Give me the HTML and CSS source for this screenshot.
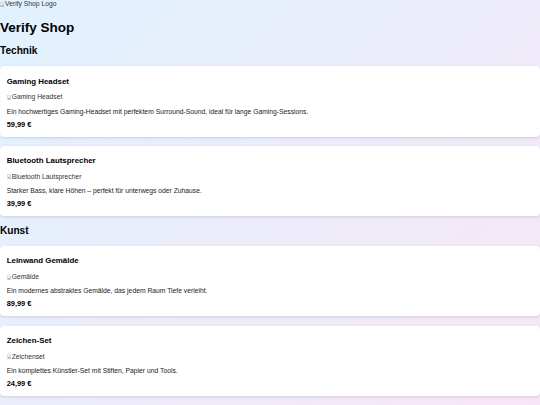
FILE: index.html
```html
<!DOCTYPE html>
<html lang="de">
<head>
    <meta charset="UTF-8">
    <meta name="viewport" content="width=device-width, initial-scale=1.0">
    <title>Verify Shop</title>
    <link rel="stylesheet" href="styles.css">
</head>
<body>

<!-- Logo (image not loaded, alt text shown) -->
<div class="logo">
    <svg class="broken-img" viewBox="0 0 8 9"><path d="M0.5 0.5h5l2 2v6h-7z" fill="#f4f4f4" stroke="#9a9a9a" stroke-width="0.6"/><path d="M1.2 7.8l2-2.4 1.4 1.4 1-0.9 1.3 1.9z" fill="#5aa65a"/><circle cx="5.6" cy="3.6" r="0.8" fill="#4a8fd8"/></svg>Verify Shop Logo
</div>

<h1>Verify Shop</h1>

<section class="category">
    <h2>Technik</h2>
    <div class="products">
        <article class="product">
            <h3>Gaming Headset</h3>
            <div class="product-img">
                <svg class="broken-img" viewBox="0 0 8 9"><path d="M0.5 0.5h5l2 2v6h-7z" fill="#f4f4f4" stroke="#9a9a9a" stroke-width="0.6"/><path d="M1.2 7.8l2-2.4 1.4 1.4 1-0.9 1.3 1.9z" fill="#5aa65a"/><circle cx="5.6" cy="3.6" r="0.8" fill="#4a8fd8"/></svg>Gaming Headset
            </div>
            <p class="desc">Ein hochwertiges Gaming-Headset mit perfektem Surround-Sound, ideal für lange Gaming-Sessions.</p>
            <p class="price">59,99 €</p>
        </article>
        <article class="product">
            <h3>Bluetooth Lautsprecher</h3>
            <div class="product-img">
                <svg class="broken-img" viewBox="0 0 8 9"><path d="M0.5 0.5h5l2 2v6h-7z" fill="#f4f4f4" stroke="#9a9a9a" stroke-width="0.6"/><path d="M1.2 7.8l2-2.4 1.4 1.4 1-0.9 1.3 1.9z" fill="#5aa65a"/><circle cx="5.6" cy="3.6" r="0.8" fill="#4a8fd8"/></svg>Bluetooth Lautsprecher
            </div>
            <p class="desc">Starker Bass, klare Höhen – perfekt für unterwegs oder Zuhause.</p>
            <p class="price">39,99 €</p>
        </article>
    </div>
</section>

<section class="category">
    <h2>Kunst</h2>
    <div class="products">
        <article class="product">
            <h3>Leinwand Gemälde</h3>
            <div class="product-img">
                <svg class="broken-img" viewBox="0 0 8 9"><path d="M0.5 0.5h5l2 2v6h-7z" fill="#f4f4f4" stroke="#9a9a9a" stroke-width="0.6"/><path d="M1.2 7.8l2-2.4 1.4 1.4 1-0.9 1.3 1.9z" fill="#5aa65a"/><circle cx="5.6" cy="3.6" r="0.8" fill="#4a8fd8"/></svg>Gemälde
            </div>
            <p class="desc">Ein modernes abstraktes Gemälde, das jedem Raum Tiefe verleiht.</p>
            <p class="price">89,99 €</p>
        </article>
        <article class="product">
            <h3>Zeichen-Set</h3>
            <div class="product-img">
                <svg class="broken-img" viewBox="0 0 8 9"><path d="M0.5 0.5h5l2 2v6h-7z" fill="#f4f4f4" stroke="#9a9a9a" stroke-width="0.6"/><path d="M1.2 7.8l2-2.4 1.4 1.4 1-0.9 1.3 1.9z" fill="#5aa65a"/><circle cx="5.6" cy="3.6" r="0.8" fill="#4a8fd8"/></svg>Zeichenset
            </div>
            <p class="desc">Ein komplettes Künstler-Set mit Stiften, Papier und Tools.</p>
            <p class="price">24,99 €</p>
        </article>
    </div>
</section>

</body>
</html>
```

FILE: styles.css
```css
/* Basic styling */
body {
    margin: 0;
    min-height: 100vh;
    font-family: "Liberation Sans", Arial, sans-serif;
    font-size: 6.75px;
    color: #000;
    background: linear-gradient(135deg, #e0f2fe, #f8e6f6);
}

/* Logo */
.logo {
    line-height: 8px;
    color: #333;
    display: flex;
    align-items: center;
}
.broken-img {
    width: 4.5px;
    height: 5px;
    margin-right: 0.5px;
    flex-shrink: 0;
}

/* Headings */
h1 {
    font-size: 13.5px;
    line-height: 15.5px;
    margin: 12.3px 0 9px;
}
h2 {
    font-size: 10.1px;
    line-height: 11.6px;
    margin: 8.4px 0 10px;
}

/* Product cards */
.products {
    display: flex;
    flex-direction: column;
    gap: 9.3px;
}
.product {
    background-color: #fff;
    border-radius: 4px;
    padding: 10.2px 7px 7.6px 6.7px;
    box-shadow: 0 1px 3px rgba(0, 0, 0, 0.12);
}
.product h3 {
    font-size: 7.9px;
    line-height: 9.1px;
    margin: 0 0 7.7px;
}
.product-img {
    display: flex;
    align-items: center;
    line-height: 7.8px;
    color: #333;
    margin-bottom: 6.5px;
}
.desc {
    line-height: 7.8px;
    color: #222;
    margin: 0 0 5.1px;
}
.price {
    font-size: 7.4px;
    line-height: 8.5px;
    font-weight: bold;
    margin: 0;
}
```
